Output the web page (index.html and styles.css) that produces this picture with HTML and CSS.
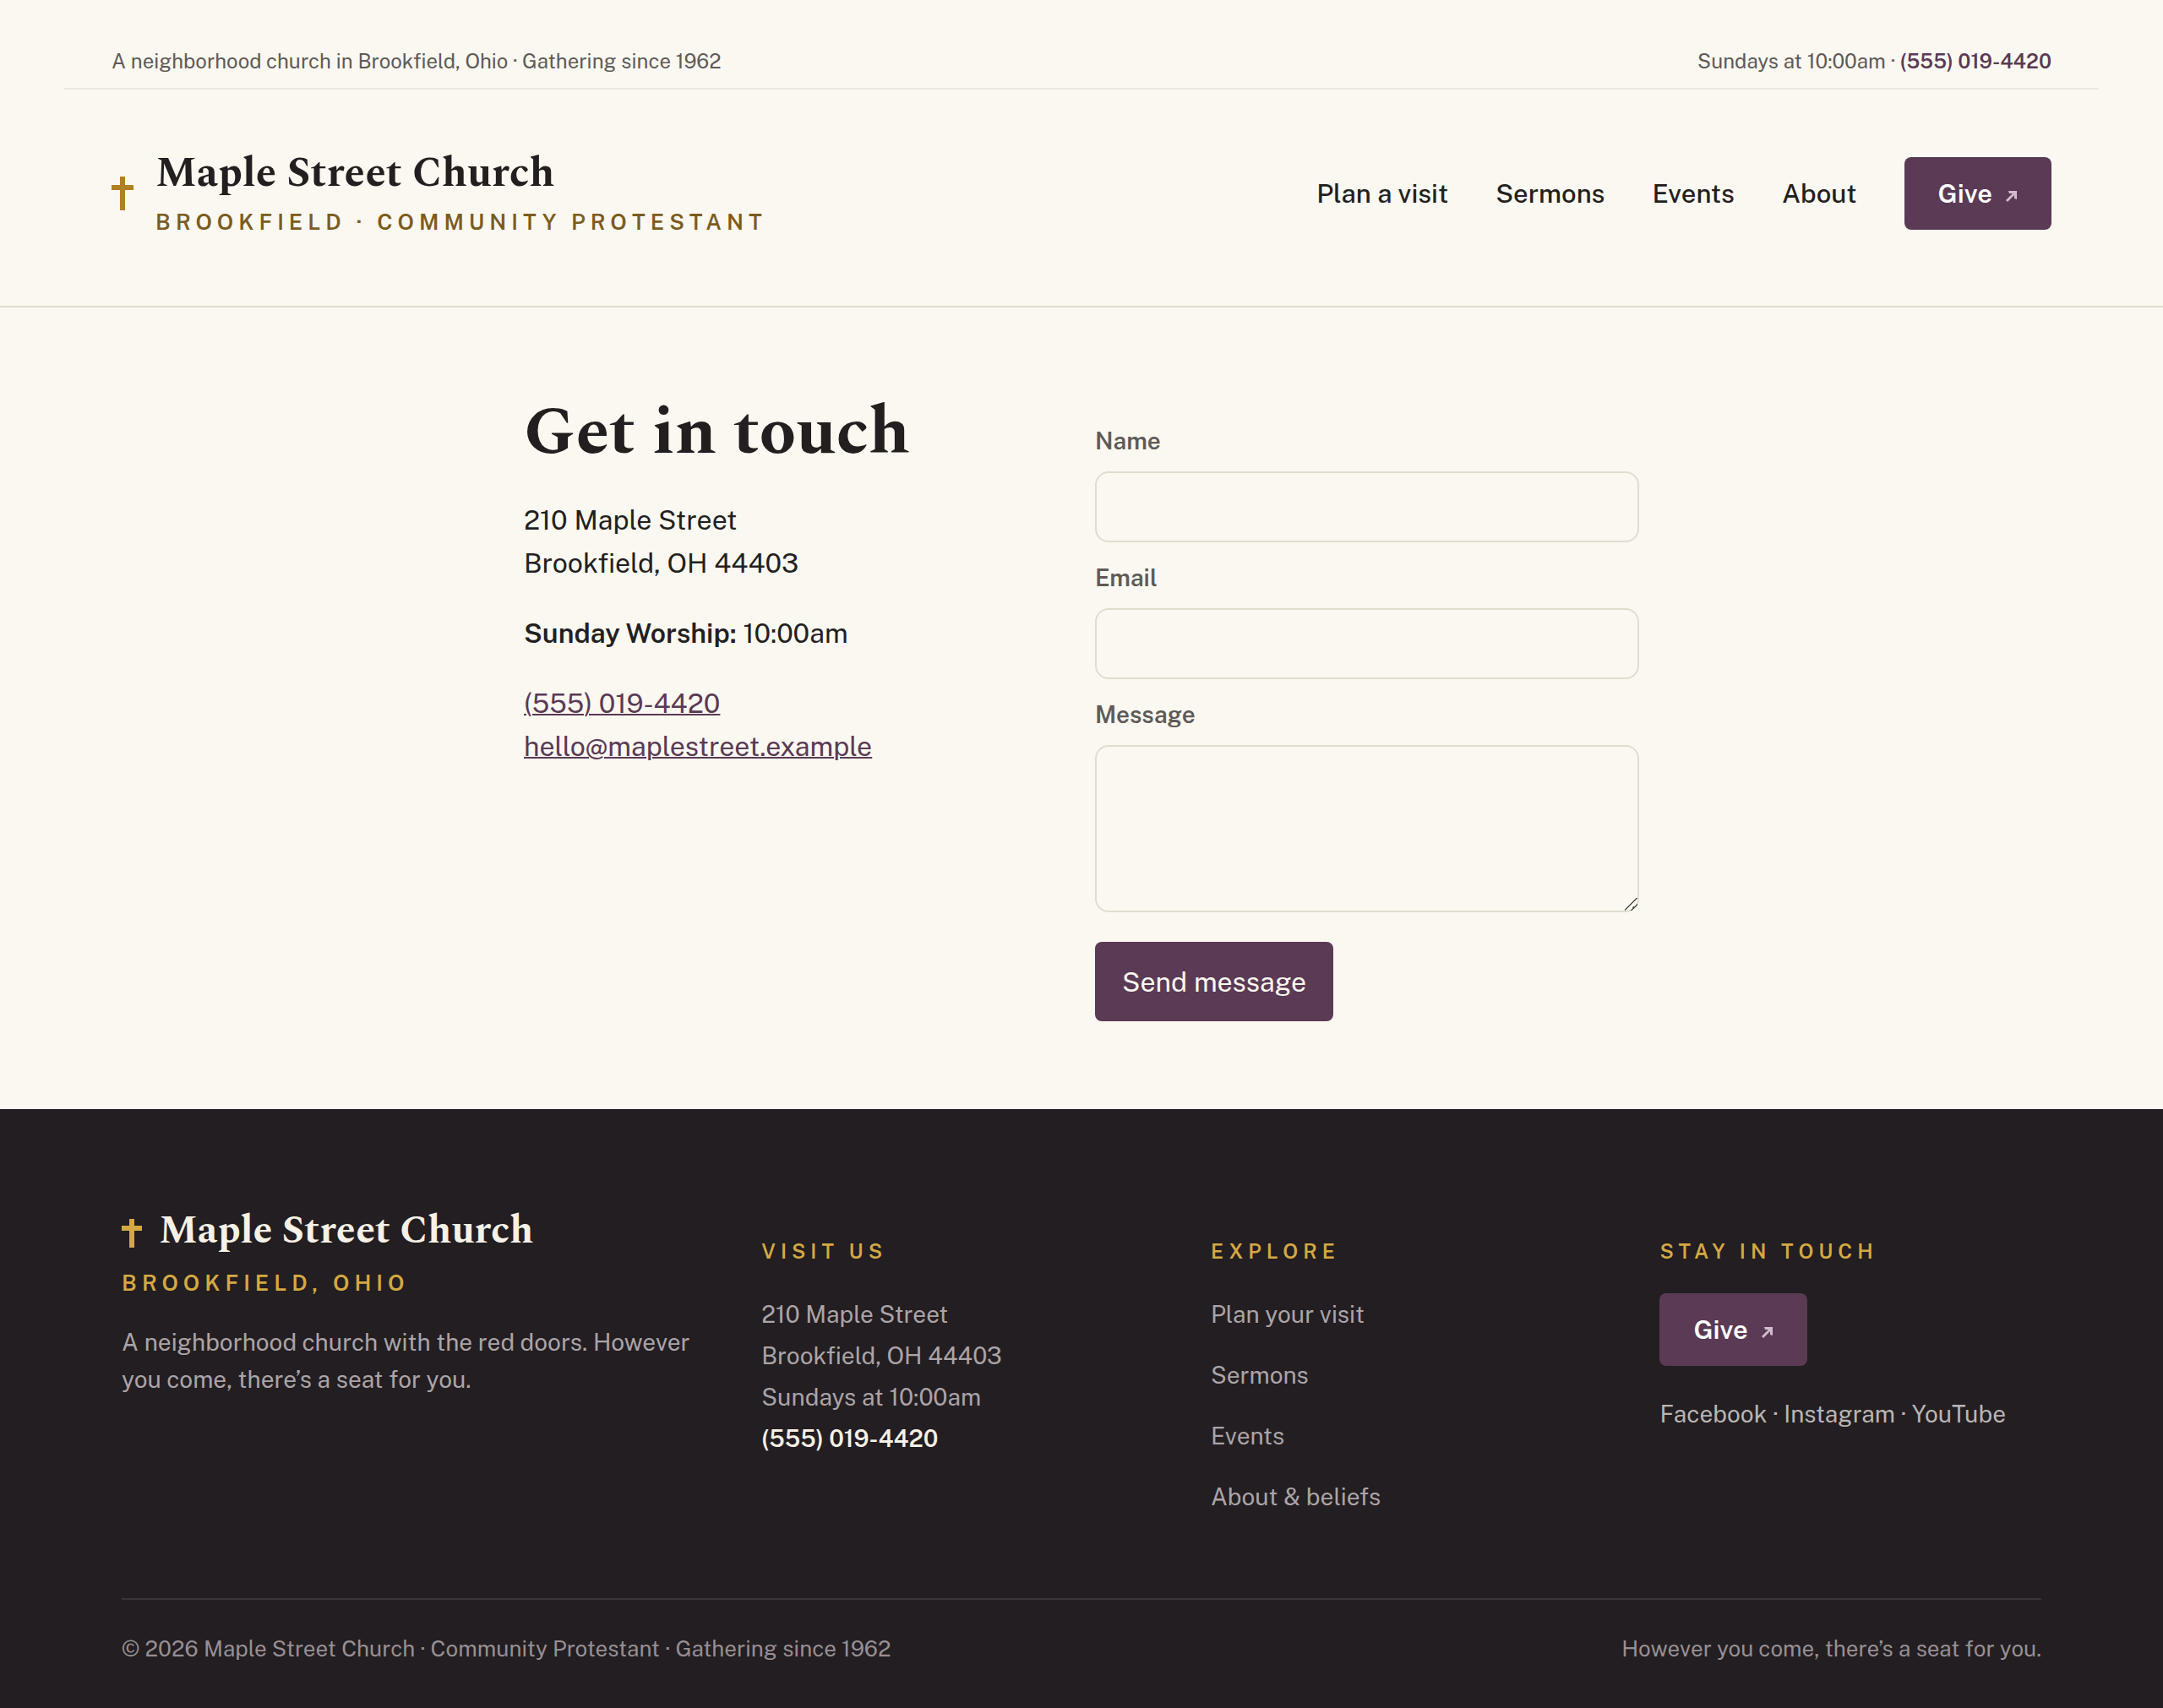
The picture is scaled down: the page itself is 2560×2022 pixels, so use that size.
FILE: index.html
```html
<!DOCTYPE html>
<html lang="en">
<head>
    <meta charset="UTF-8">
    <meta name="viewport" content="width=device-width, initial-scale=1.0">
    <title>Contact | Maple Street Church</title>
    <link rel="stylesheet" href="styles.css">
</head>
<body>
<header class="site-header">
    <div class="top-bar">
        <span>A neighborhood church in Brookfield, Ohio · Gathering since 1962</span>
        <span>Sundays at 10:00am · <a class="top-phone" href="tel:5550194420">(555) 019-4420</a></span>
    </div>
    <div class="main-bar">
        <a class="brand" href="#">
            <svg class="cross" viewBox="0 0 26 40" aria-hidden="true"><path d="M10 0h6v10h10v6H16v24h-6V16H0v-6h10z"/></svg>
            <span class="brand-text">
                <span class="brand-name">Maple Street Church</span>
                <span class="brand-sub">Brookfield · Community Protestant</span>
            </span>
        </a>
        <nav class="nav">
            <a href="#">Plan a visit</a>
            <a href="#">Sermons</a>
            <a href="#">Events</a>
            <a href="#">About</a>
            <a class="give-btn" href="#">Give
                <svg class="arrow" viewBox="0 0 16 16" aria-hidden="true"><path d="M5 2h10v10l-3-1V7l-8 8-2-2 8-8H6z"/></svg>
            </a>
        </nav>
    </div>
</header>

<main class="contact">
    <section class="contact-info">
        <h1>Get in touch</h1>
        <p>210 Maple Street<br>Brookfield, OH 44403</p>
        <p><strong>Sunday Worship:</strong> 10:00am</p>
        <p><a href="tel:5550194420">(555) 019-4420</a><br><a href="mailto:hello@maplestreet.example">hello@maplestreet.example</a></p>
    </section>
    <form class="contact-form">
        <div class="field">
            <label for="name">Name</label>
            <input type="text" id="name" name="name">
        </div>
        <div class="field">
            <label for="email">Email</label>
            <input type="email" id="email" name="email">
        </div>
        <div class="field">
            <label for="message">Message</label>
            <textarea id="message" name="message"></textarea>
        </div>
        <button class="send-btn" type="submit">Send message</button>
    </form>
</main>

<footer class="site-footer">
    <div class="footer-grid">
        <div class="footer-about">
            <div class="footer-brand">
                <svg class="cross" viewBox="0 0 24 34" aria-hidden="true"><path d="M9 0h6v8h9v6h-9v20H9V14H0V8h9z"/></svg>
                <span class="footer-name">Maple Street Church</span>
            </div>
            <p class="footer-place">Brookfield, Ohio</p>
            <p class="footer-text">A neighborhood church with the red doors. However you come, there’s a seat for you.</p>
        </div>
        <div class="footer-col">
            <h2>Visit us</h2>
            <p>210 Maple Street<br>Brookfield, OH 44403<br>Sundays at 10:00am<br><a class="footer-phone" href="tel:5550194420">(555) 019-4420</a></p>
        </div>
        <div class="footer-col">
            <h2>Explore</h2>
            <ul class="footer-links">
                <li><a href="#">Plan your visit</a></li>
                <li><a href="#">Sermons</a></li>
                <li><a href="#">Events</a></li>
                <li><a href="#">About &amp; beliefs</a></li>
            </ul>
        </div>
        <div class="footer-col">
            <h2>Stay in touch</h2>
            <a class="give-btn" href="#">Give
                <svg class="arrow" viewBox="0 0 16 16" aria-hidden="true"><path d="M5 2h10v10l-3-1V7l-8 8-2-2 8-8H6z"/></svg>
            </a>
            <p class="social"><a href="#">Facebook</a> · <a href="#">Instagram</a> · <a href="#">YouTube</a></p>
        </div>
    </div>
    <div class="footer-bottom">
        <span>© 2026 Maple Street Church · Community Protestant · Gathering since 1962</span>
        <span>However you come, there’s a seat for you.</span>
    </div>
</footer>
</body>
</html>
```

FILE: styles.css
```css
* {
    margin: 0;
    padding: 0;
    box-sizing: border-box;
}
:root {
    --cream: #fbf8f1;
    --ink: #231f20;
    --muted: #5f5a57;
    --plum: #5a3a54;
    --line: #e0ddcf;
    --gold: #b08024;
    --gold-dark: #7b5c1e;
    --gold-light: #d4a943;
    --serif: "Spectral", "Liberation Serif", serif;
    --sans: "Public Sans", "Inter", sans-serif;
}
body {
    background: var(--cream);
    color: var(--ink);
    font-family: var(--sans);
    font-size: 32px;
    line-height: 51px;
}
a {
    color: inherit;
    text-decoration: none;
}

/* header */
.site-header {
    padding: 40px 76px 0;
    border-bottom: 2px solid var(--line);
}
.top-bar {
    display: flex;
    justify-content: space-between;
    padding: 12px 56px;
    border-bottom: 2px solid #ebe8e1;
    color: var(--muted);
    font-size: 24px;
    line-height: 40px;
}
.top-phone {
    color: var(--plum);
    font-weight: 600;
}
.main-bar {
    display: flex;
    justify-content: space-between;
    align-items: center;
    padding: 67px 56px 77px;
}
.brand {
    display: flex;
    align-items: center;
    gap: 26px;
}
.cross {
    display: block;
    width: 26px;
    height: 40px;
    fill: var(--gold);
}
.brand-text {
    display: flex;
    flex-direction: column;
    gap: 4px;
    padding-top: 2px;
}
.brand-name {
    font-family: var(--serif);
    font-size: 49px;
    font-weight: 700;
    line-height: 62px;
}
.brand-sub {
    color: var(--gold-dark);
    font-size: 26px;
    font-weight: 600;
    letter-spacing: 6px;
    line-height: 44px;
    text-transform: uppercase;
}
.nav {
    display: flex;
    align-items: center;
    gap: 56px;
    font-size: 31px;
    font-weight: 500;
}
.give-btn {
    display: inline-flex;
    align-items: center;
    gap: 14px;
    height: 86px;
    padding: 0 40px;
    border-radius: 8px;
    background: var(--plum);
    color: #fff;
    font-size: 31px;
    font-weight: 600;
}
.arrow {
    width: 16px;
    height: 16px;
    margin-top: 6px;
    fill: #d3bccb;
}

/* contact */
.contact {
    display: grid;
    grid-template-columns: 1fr 1fr;
    gap: 32px;
    max-width: 1320px;
    margin: 0 auto;
    padding: 100px 0 104px;
}
.contact-info h1 {
    margin-bottom: 30px;
    font-family: var(--serif);
    font-size: 80px;
    line-height: 96px;
}
.contact-info p {
    margin-bottom: 32px;
}
.contact-info strong {
    font-weight: 600;
}
.contact-info a {
    color: var(--plum);
    text-decoration: underline;
    text-decoration-thickness: 2px;
}
.contact-form {
    padding-top: 36px;
}
.field {
    margin-bottom: 20px;
}
.field label {
    display: block;
    margin-bottom: 14px;
    color: var(--muted);
    font-size: 28px;
    font-weight: 600;
    line-height: 44px;
}
.field input,
.field textarea {
    display: block;
    width: 100%;
    height: 84px;
    padding: 16px 24px;
    border: 2px solid var(--line);
    border-radius: 16px;
    background: transparent;
    color: inherit;
    font: inherit;
}
.field textarea {
    height: 198px;
    resize: vertical;
}
.field textarea::-webkit-resizer {
    background: linear-gradient(135deg, transparent 45%, #555 45%, #555 52%, transparent 52%, transparent 70%, #555 70%, #555 77%, transparent 77%);
}
.send-btn {
    height: 94px;
    margin-top: 15px;
    padding: 0 32px;
    border: none;
    border-radius: 8px;
    background: var(--plum);
    color: var(--cream);
    font: inherit;
    cursor: pointer;
}

/* footer */
.site-footer {
    padding: 112px 144px 48px;
    background: #231e21;
    color: #aba4a8;
    font-size: 28px;
    line-height: 49px;
}
.footer-grid {
    display: grid;
    grid-template-columns: 3fr 2fr 2fr 2fr;
    gap: 80px;
    padding-bottom: 96px;
}
.footer-brand {
    display: flex;
    align-items: center;
    gap: 20px;
}
.footer-brand .cross {
    width: 24px;
    height: 34px;
    margin-top: 6px;
    fill: var(--gold-light);
}
.footer-name {
    color: #f7f1e6;
    font-family: var(--serif);
    font-size: 46px;
    font-weight: 700;
    line-height: 64px;
}
.footer-place {
    margin: 8px 0 26px;
    color: var(--gold-light);
    font-size: 26px;
    font-weight: 600;
    letter-spacing: 6px;
    line-height: 44px;
    text-transform: uppercase;
}
.footer-text {
    line-height: 44px;
}
.footer-col {
    padding-top: 36px;
}
.footer-col h2 {
    margin-bottom: 30px;
    color: var(--gold-light);
    font-size: 24px;
    font-weight: 600;
    letter-spacing: 6px;
    line-height: 40px;
    text-transform: uppercase;
}
.footer-phone {
    color: #f7f1e6;
    font-weight: 600;
}
.footer-links {
    display: flex;
    flex-direction: column;
    gap: 23px;
    list-style: none;
}
.social {
    margin-top: 32px;
    color: #b9b5b5;
}
.footer-bottom {
    display: flex;
    justify-content: space-between;
    padding-top: 36px;
    border-top: 2px solid #393437;
    color: #978f93;
    font-size: 26px;
    line-height: 44px;
}
```
